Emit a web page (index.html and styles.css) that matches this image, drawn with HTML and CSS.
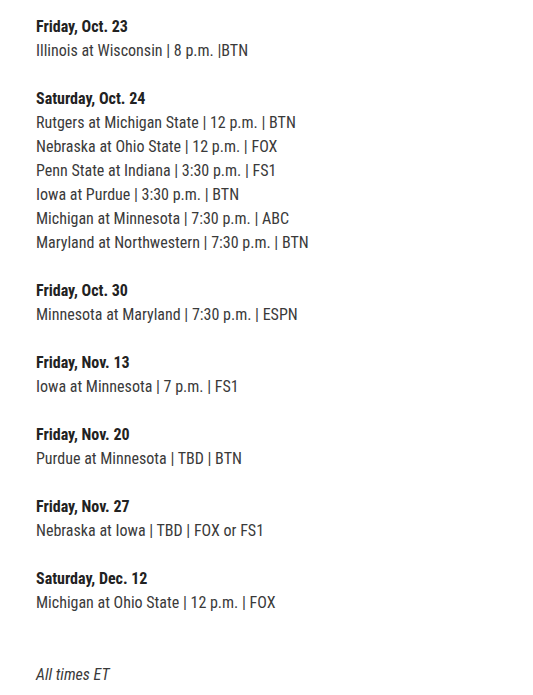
FILE: index.html
```html
<!DOCTYPE html>
<html>
<head>
<meta charset="utf-8">
<link rel="stylesheet" href="styles.css">
</head>
<body>
<div class="schedule">
  <p class="day"><strong>Friday, Oct. 23</strong><br>Illinois at Wisconsin | 8 p.m. |BTN</p>
  <p class="day"><strong>Saturday, Oct. 24</strong><br>Rutgers at Michigan State | 12 p.m. | BTN<br>Nebraska at Ohio State | 12 p.m. | FOX<br>Penn State at Indiana | 3:30 p.m. | FS1<br>Iowa at Purdue | 3:30 p.m. | BTN<br>Michigan at Minnesota | 7:30 p.m. | ABC<br>Maryland at Northwestern | 7:30 p.m. | BTN</p>
  <p class="day"><strong>Friday, Oct. 30</strong><br>Minnesota at Maryland | 7:30 p.m. | ESPN</p>
  <p class="day"><strong>Friday, Nov. 13</strong><br>Iowa at Minnesota | 7 p.m. | FS1</p>
  <p class="day"><strong>Friday, Nov. 20</strong><br>Purdue at Minnesota | TBD | BTN</p>
  <p class="day"><strong>Friday, Nov. 27</strong><br>Nebraska at Iowa | TBD | FOX or FS1</p>
  <p class="day"><strong>Saturday, Dec. 12</strong><br>Michigan at Ohio State | 12 p.m. | FOX</p>
  <p class="note"><em>All times ET</em></p>
</div>
</body>
</html>
```
FILE: styles.css
```css
html, body {
  margin: 0;
  padding: 0;
  background: #ffffff;
}
.schedule {
  padding: 15px 0 0 36px;
  font-family: Roboto, "Liberation Sans", sans-serif;
  font-stretch: 75%;
  font-size: 16px;
  line-height: 24px;
  color: #3a3a3a;
}
.day {
  margin: 0 0 24px 0;
}
.day strong {
  font-weight: 700;
  color: #222222;
}
.note {
  margin: 48px 0 0 0;
}
```
